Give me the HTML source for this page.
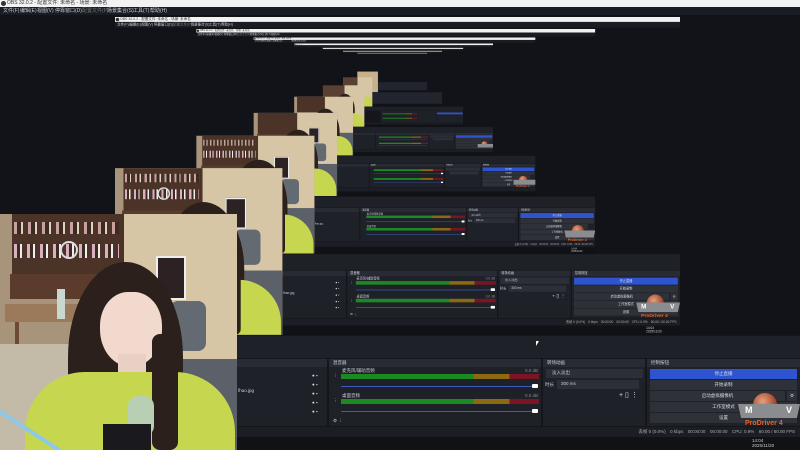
<!DOCTYPE html>
<html><head><meta charset="utf-8"><style>
*{margin:0;padding:0;box-sizing:border-box}
html,body{width:800px;height:450px;overflow:hidden;background:#111318}
.L{position:absolute;left:0;top:0;width:800px;height:450px;background:#111318;overflow:hidden;font-family:"Liberation Sans","Noto Sans CJK SC",sans-serif;color:#c9ccd4;font-size:5px;line-height:1}
.L div,.L span,.L i{position:absolute;display:block}
.ch{left:115px;top:17px;width:800px;height:450px;transform:scale(.70625);transform-origin:0 0}
.tb{left:0;top:0;width:800px;height:7px;background:#f2f2f2;color:#333;line-height:7px;padding-left:7px;white-space:nowrap}
.tb i{left:1px;top:1px;width:5px;height:5px;border-radius:50%;background:#333}
.mb{left:0;top:7px;width:800px;height:8px;background:#1a1c23;color:#c9ccd4}
.mb span{top:2px;white-space:nowrap}
.L .ph{left:0;top:214px;width:237px;height:236px;overflow:hidden;background:#a8947a;z-index:5}
.dk{left:0;top:335px;width:800px;height:92px;background:#14161b}
.bd{left:0;top:336px;width:800px;height:22px;background:#1f2129}
.pn{top:359px;height:67px;background:#1f2129}
.hd{left:0;top:0;width:100%;height:8px;background:#292b34;color:#d0d3da;padding:2px 0 0 4px;font-size:4.5px}
.t{white-space:nowrap;font-size:4.5px}
.btn{left:650px;width:147px;height:10px;background:#2f3139;color:#d8dae0;text-align:center;line-height:10px;font-size:4.5px}
.st{left:0;top:427px;width:800px;height:10px;background:#1c1e25}
.tk{left:0;top:437px;width:800px;height:13px;background:#101216}
.mt{height:5px;background:linear-gradient(90deg,#1c8a22 0 67%,#8b6a12 67% 85%,#7b1424 85%)}
.sl{height:1px;background:#3a5bbb}
.kn{width:6px;height:4px;background:#fff;border-radius:1px}
</style></head><body>
<div class="L">
<div class="tb"><i></i>OBS 32.0.2 - 配置文件: 未命名 - 场景: 未命名</div>
<div class="mb"><span style="left:3px">文件(F)</span><span style="left:20px">编辑(E)</span><span style="left:37px">视图(V)</span><span style="left:55px">停靠窗口(D)</span><span style="left:82px;color:#777">配置文件(P)</span><span style="left:107px">场景集合(S)</span><span style="left:133px">工具(T)</span><span style="left:150px">帮助(H)</span></div>
<div class="ch">
 <div class="L">
 <div class="tb"><i></i>OBS 32.0.2 - 配置文件: 未命名 - 场景: 未命名</div>
 <div class="mb"><span style="left:3px">文件(F)</span><span style="left:20px">编辑(E)</span><span style="left:37px">视图(V)</span><span style="left:55px">停靠窗口(D)</span><span style="left:82px;color:#777">配置文件(P)</span><span style="left:107px">场景集合(S)</span><span style="left:133px">工具(T)</span><span style="left:150px">帮助(H)</span></div>
 <div class="ch">
  <div class="L">
  <div class="tb"><i></i>OBS 32.0.2 - 配置文件: 未命名 - 场景: 未命名</div>
  <div class="mb"><span style="left:3px">文件(F)</span><span style="left:20px">编辑(E)</span><span style="left:37px">视图(V)</span><span style="left:55px">停靠窗口(D)</span><span style="left:82px;color:#777">配置文件(P)</span><span style="left:107px">场景集合(S)</span><span style="left:133px">工具(T)</span><span style="left:150px">帮助(H)</span></div>
  <div class="ch">
   <div class="L">
   <div class="tb"><i></i>OBS 32.0.2 - 配置文件: 未命名 - 场景: 未命名</div>
   <div class="mb"><span style="left:3px">文件(F)</span><span style="left:20px">编辑(E)</span><span style="left:37px">视图(V)</span><span style="left:55px">停靠窗口(D)</span><span style="left:107px">场景集合(S)</span><span style="left:133px">工具(T)</span></div>
   <div class="ch">
    <div class="L">
    <div class="tb"><i></i>OBS 32.0.2</div>
    <div class="mb"></div>
    <div class="ch">
     <div class="L">
     <div class="tb"></div><div class="mb"></div>
     <div class="ch">
      <div class="L">
      <div class="tb"></div><div class="mb"></div>
      <div class="ch"><div class="L"><div class="tb"></div><div class="mb"></div><div class="ph" style="background:#c8b08a"></div><div class="dk" style="background:#22252d"></div><div class="tk"></div></div></div>
      <div class="ph" style="background:linear-gradient(90deg,#5a4030 0 50%,#d6c6a6 50%)"><div style="left:25px;top:158px;width:210px;height:90px;background:#c6d64e"></div></div>
      <div class="dk" style="background:#22252d"></div><div class="tk"></div>
      </div>
     </div>
     <div class="ph" style="background:linear-gradient(90deg,#5a4030 0 52%,#d6c6a6 52%)"><div style="left:68px;top:48px;width:115px;height:190px;background:#2c201c;border-radius:50%"></div><div style="left:25px;top:158px;width:210px;height:90px;background:#c6d64e;border-radius:60px 60px 0 0"></div></div>
     <div class="dk"></div><div class="bd"></div><div class="pn" style="left:329px;width:212px"><div class="mt" style="left:12px;top:15px;width:198px"></div><div class="mt" style="left:12px;top:40px;width:198px"></div></div><div class="pn" style="left:543px;width:102px"></div><div class="pn" style="left:647px;width:153px"><div style="left:3px;top:10px;width:147px;height:10px;background:#2e54d0"></div></div><div class="st"></div><div class="tk"></div>
     </div>
    </div>
    <div class="ph">
     <div style="left:12px;top:0;width:112px;height:62px;background:#4b3327"></div>
     <div style="left:124px;top:0;width:113px;height:150px;background:#d6c6a6"></div>
     <div style="left:0;top:130px;width:125px;height:106px;background:#c4baa8"></div>
     <div style="left:165px;top:145px;width:72px;height:91px;background:#5c6068"></div>
     <div style="left:68px;top:48px;width:115px;height:190px;background:#2c201c;border-radius:50% 50% 10% 10%"></div>
     <div style="left:100px;top:78px;width:62px;height:75px;background:#f1d9ce;border-radius:45% 45% 50% 50%"></div>
     <div style="left:25px;top:158px;width:210px;height:90px;background:#c6d64e;border-radius:60px 60px 0 0"></div>
     <div style="left:128px;top:182px;width:26px;height:40px;background:#b9cfb3;border-radius:10px"></div>
    </div>
    <div class="dk"></div><div class="bd"></div>
    <div class="pn" style="left:0;width:327px"><div class="hd"></div></div>
    <div class="pn" style="left:329px;width:212px"><div class="hd"></div><div class="mt" style="left:12px;top:15px;width:198px"></div><div class="sl" style="left:12px;top:27px;width:194px"></div><div class="mt" style="left:12px;top:40px;width:198px"></div><div class="sl" style="left:12px;top:52px;width:194px"></div></div>
    <div class="pn" style="left:543px;width:102px"><div class="hd"></div><div style="left:3px;top:10px;width:97px;height:9px;background:#2c2e38"></div><div style="left:14px;top:21px;width:82px;height:9px;background:#2c2e38"></div></div>
    <div class="pn" style="left:647px;width:153px"><div class="hd"></div></div>
    <div class="btn" style="top:369px;background:#2e54d0"></div><div class="btn" style="top:380px"></div><div class="btn" style="top:391px;width:135px"></div><div class="btn" style="top:402px"></div><div class="btn" style="top:413px"></div>
    <div style="left:753px;top:393px;width:24px;height:24px;border-radius:50%;background:radial-gradient(circle at 40% 35%,#e8a080,#a04a2a 60%,#6a2a18)"></div>
    <div style="left:738px;top:404px;width:62px;height:14px;background:#8a8c90"></div>
    <div class="st"></div><div class="tk"></div>
    </div>
   </div>
   <div class="ph">
    <div style="left:12px;top:0;width:112px;height:62px;background:#4b3327"></div>
    <div style="left:10px;top:60px;width:100px;height:25px;background:#5b3b2b"></div>
    <div style="left:124px;top:0;width:113px;height:150px;background:#d6c6a6"></div>
    <div style="left:156px;top:42px;width:30px;height:44px;background:#2c2224;border:2px solid #eee"></div>
    <div style="left:0;top:130px;width:125px;height:106px;background:#c4baa8"></div>
    <div style="left:170px;top:87px;width:36px;height:50px;background:#646a72;border-radius:8px"></div>
    <div style="left:165px;top:145px;width:72px;height:91px;background:#5c6068"></div>
    <div style="left:68px;top:48px;width:115px;height:190px;background:#2c201c;border-radius:50% 50% 10% 10%"></div>
    <div style="left:100px;top:78px;width:62px;height:75px;background:#f1d9ce;border-radius:45% 45% 50% 50%"></div>
    <div style="left:25px;top:158px;width:210px;height:90px;background:#c6d64e;border-radius:60px 60px 0 0"></div>
    <div style="left:128px;top:182px;width:26px;height:40px;background:#b9cfb3;border-radius:10px"></div>
    <div style="left:103px;top:210px;width:48px;height:26px;background:#1a1a1e"></div>
   </div>
   <div class="dk"></div><div class="bd"></div>
   <div class="pn" style="left:0;width:327px"><div class="hd"></div></div>
   <div class="pn" style="left:329px;width:212px"><div class="hd">混音器</div><div class="mt" style="left:12px;top:15px;width:198px"></div><div class="sl" style="left:12px;top:27px;width:194px"></div><div class="kn" style="left:203px;top:25px"></div><div class="mt" style="left:12px;top:40px;width:198px"></div><div class="sl" style="left:12px;top:52px;width:194px"></div><div class="kn" style="left:203px;top:50px"></div></div>
   <div class="pn" style="left:543px;width:102px"><div class="hd">转场动画</div><div style="left:3px;top:10px;width:97px;height:9px;background:#2c2e38"></div><div style="left:14px;top:21px;width:82px;height:9px;background:#2c2e38"></div></div>
   <div class="pn" style="left:647px;width:153px"><div class="hd">控制按钮</div></div>
   <div class="btn" style="top:369px;background:#2e54d0">停止直播</div><div class="btn" style="top:380px">开始录制</div><div class="btn" style="top:391px;width:135px">启动虚拟摄像机</div><div class="btn" style="top:402px">工作室模式</div><div class="btn" style="top:413px">设置</div>
   <div style="left:753px;top:393px;width:24px;height:24px;border-radius:50%;background:radial-gradient(circle at 40% 35%,#e8a080,#a04a2a 60%,#6a2a18)"></div>
   <div style="left:738px;top:404px;width:62px;height:14px;background:#8a8c90"></div>
   <div class="t" style="left:745px;top:420px;color:#e8622a;font-weight:bold;font-size:7px">ProDriver 4</div>
   <div class="st"></div><div class="tk"></div>
   </div>
  </div>
  <div class="ph">
   <div style="left:12px;top:0;width:112px;height:62px;background:#4b3327"></div>
   <div style="left:14px;top:8px;width:105px;height:12px;background:repeating-linear-gradient(90deg,#c8a0a0 0 3px,#3a2a20 3px 7px,#e0d0c0 7px 9px,#4b3327 9px 14px)"></div>
   <div style="left:14px;top:30px;width:105px;height:14px;background:repeating-linear-gradient(90deg,#d8b0c0 0 3px,#3a2a20 3px 6px,#eee 6px 8px,#4b3327 8px 13px)"></div>
   <div style="left:10px;top:60px;width:100px;height:25px;background:#5b3b2b"></div>
   <div style="left:124px;top:0;width:113px;height:150px;background:#d6c6a6"></div>
   <div style="left:156px;top:42px;width:30px;height:44px;background:#2c2224;border:2px solid #eee"></div>
   <div style="left:5px;top:90px;width:80px;height:18px;background:#9a7a5a"></div>
   <div style="left:0;top:130px;width:125px;height:106px;background:#c4baa8"></div>
   <div style="left:170px;top:87px;width:36px;height:50px;background:#646a72;border-radius:8px"></div>
   <div style="left:165px;top:145px;width:72px;height:91px;background:#5c6068"></div>
   <div style="left:68px;top:48px;width:115px;height:190px;background:#2c201c;border-radius:50% 50% 10% 10%"></div>
   <div style="left:100px;top:78px;width:62px;height:75px;background:#f1d9ce;border-radius:45% 45% 50% 50%"></div>
   <div style="left:25px;top:158px;width:210px;height:90px;background:#c6d64e;border-radius:60px 60px 0 0"></div>
   <div style="left:152px;top:120px;width:26px;height:116px;background:#2c201c;border-radius:8px"></div>
   <div style="left:128px;top:182px;width:26px;height:40px;background:#b9cfb3;border-radius:10px"></div>
   <div style="left:103px;top:210px;width:48px;height:26px;background:#1a1a1e"></div>
  </div>
  <div class="dk"></div><div class="bd"></div>
  <div class="pn" style="left:0;width:327px"><div class="hd"></div><div class="t" style="left:238px;top:30px">fhao.jpg</div></div>
  <div class="pn" style="left:329px;width:212px"><div class="hd">混音器</div><div class="t" style="left:13px;top:10px">麦克风/辅助音频</div><div class="mt" style="left:12px;top:15px;width:198px"></div><div class="sl" style="left:12px;top:27px;width:194px"></div><div class="kn" style="left:203px;top:25px"></div><div class="t" style="left:13px;top:35px">桌面音频</div><div class="mt" style="left:12px;top:40px;width:198px"></div><div class="sl" style="left:12px;top:52px;width:194px"></div><div class="kn" style="left:203px;top:50px"></div></div>
  <div class="pn" style="left:543px;width:102px"><div class="hd">转场动画</div><div class="t" style="left:3px;top:10px;width:97px;height:9px;background:#2c2e38;padding:2px 6px">淡入淡出</div><div class="t" style="left:2px;top:24px">时长</div><div class="t" style="left:14px;top:21px;width:82px;height:9px;background:#2c2e38;padding:2px 4px">300 ms</div></div>
  <div class="pn" style="left:647px;width:153px"><div class="hd">控制按钮</div></div>
  <div class="btn" style="top:369px;background:#2e54d0">停止直播</div><div class="btn" style="top:380px">开始录制</div><div class="btn" style="top:391px;width:135px">启动虚拟摄像机</div><div class="btn" style="top:402px">工作室模式</div><div class="btn" style="top:413px">设置</div>
  <div style="left:753px;top:393px;width:24px;height:24px;border-radius:50%;background:radial-gradient(circle at 40% 35%,#e8a080,#a04a2a 60%,#6a2a18)"></div>
  <div style="left:738px;top:404px;width:62px;height:14px;background:#8a8c90;clip-path:polygon(0 0,100% 0,95% 100%,5% 100%)"></div>
  <div class="t" style="left:745px;top:420px;color:#e8622a;font-weight:bold;font-size:7px">ProDriver 4</div>
  <div class="st"><div class="t" style="right:5px;top:3px;color:#aaa">丢帧 0 (0.0%)　0 kbps　00:00:00　00:00:00　CPU: 0.9%　60.00 / 60.00 FPS</div></div>
  <div class="tk"><div class="t" style="left:752px;top:2px;color:#ccc">14:04<br>2025/11/20</div></div>
  </div>
 </div>
 <div class="ph">
  <div style="left:12px;top:0;width:112px;height:62px;background:#4b3327"></div>
  <div style="left:14px;top:8px;width:105px;height:12px;background:repeating-linear-gradient(90deg,#c8a0a0 0 3px,#3a2a20 3px 7px,#e0d0c0 7px 9px,#4b3327 9px 14px)"></div>
  <div style="left:14px;top:30px;width:105px;height:14px;background:repeating-linear-gradient(90deg,#d8b0c0 0 3px,#3a2a20 3px 6px,#eee 6px 8px,#4b3327 8px 13px)"></div>
  <div style="left:60px;top:27px;width:18px;height:18px;border:2px solid #ddd;border-radius:50%"></div>
  <div style="left:10px;top:60px;width:100px;height:25px;background:#5b3b2b"></div>
  <div style="left:124px;top:0;width:113px;height:150px;background:#d6c6a6"></div>
  <div style="left:156px;top:42px;width:30px;height:44px;background:#2c2224;border:2px solid #eee"></div>
  <div style="left:5px;top:90px;width:80px;height:18px;background:#9a7a5a"></div>
  <div style="left:0;top:130px;width:125px;height:106px;background:#c4baa8"></div>
  <div style="left:57px;top:75px;width:8px;height:30px;background:#c8d8d0"></div>
  <div style="left:170px;top:87px;width:36px;height:50px;background:#646a72;border-radius:8px"></div>
  <div style="left:165px;top:145px;width:72px;height:91px;background:#5c6068"></div>
  <div style="left:68px;top:48px;width:115px;height:190px;background:#2c201c;border-radius:50% 50% 10% 10%"></div>
  <div style="left:100px;top:78px;width:62px;height:75px;background:#f1d9ce;border-radius:45% 45% 50% 50%"></div>
  <div style="left:25px;top:158px;width:210px;height:90px;background:#c6d64e;border-radius:60px 60px 0 0"></div>
  <div style="left:152px;top:120px;width:26px;height:116px;background:#2c201c;border-radius:8px"></div>
  <div style="left:128px;top:182px;width:26px;height:40px;background:#b9cfb3;border-radius:10px"></div>
  <div style="left:103px;top:210px;width:48px;height:26px;background:#1a1a1e"></div>
 </div>
 <div class="dk"></div><div class="bd"></div>
 <div class="pn" style="left:0;width:327px"><div class="hd"></div><div class="t" style="left:238px;top:30px">fhao.jpg</div><div class="t" style="left:312px;top:12px;line-height:9px;color:#ddd">● ▪<br>● ▪<br>● ▪<br>● ▪<br>● ▪</div></div>
 <div class="pn" style="left:329px;width:212px"><div class="hd">混音器</div><div class="t" style="left:13px;top:10px">麦克风/辅助音频</div><div class="t" style="left:196px;top:10px;color:#888">0.0 dB</div><div class="mt" style="left:12px;top:15px;width:198px"></div><div class="t" style="left:4px;top:15px">⋮</div><div class="sl" style="left:12px;top:27px;width:194px"></div><div class="kn" style="left:203px;top:25px"></div><div class="t" style="left:13px;top:35px">桌面音频</div><div class="t" style="left:196px;top:35px;color:#888">0.0 dB</div><div class="mt" style="left:12px;top:40px;width:198px"></div><div class="t" style="left:4px;top:40px">⋮</div><div class="sl" style="left:12px;top:52px;width:194px"></div><div class="kn" style="left:203px;top:50px"></div><div class="t" style="left:4px;top:60px">⚙ ⋮</div></div>
 <div class="pn" style="left:543px;width:102px"><div class="hd">转场动画</div><div class="t" style="left:3px;top:10px;width:97px;height:9px;background:#2c2e38;padding:2px 6px">淡入淡出</div><div class="t" style="left:2px;top:24px">时长</div><div class="t" style="left:14px;top:21px;width:82px;height:9px;background:#2c2e38;padding:2px 4px">300 ms</div><div class="t" style="left:76px;top:33px;font-size:7px;color:#ddd">+ ▯ ⋮</div></div>
 <div class="pn" style="left:647px;width:153px"><div class="hd">控制按钮</div></div>
 <div class="btn" style="top:369px;background:#2e54d0">停止直播</div><div class="btn" style="top:380px">开始录制</div><div class="btn" style="top:391px;width:135px">启动虚拟摄像机</div><div class="btn" style="top:391px;left:787px;width:10px">⚙</div><div class="btn" style="top:402px">工作室模式</div><div class="btn" style="top:413px">设置</div>
 <div style="left:753px;top:393px;width:24px;height:24px;border-radius:50%;background:radial-gradient(circle at 40% 35%,#e8a080,#a04a2a 60%,#6a2a18)"></div>
 <div style="left:738px;top:404px;width:62px;height:14px;background:#8a8c90;clip-path:polygon(0 0,100% 0,95% 100%,5% 100%)"></div>
 <div class="t" style="left:745px;top:406px;color:#fff;font-weight:bold;font-size:9px">M</div><div class="t" style="left:786px;top:406px;color:#fff;font-weight:bold;font-size:9px">V</div>
 <div class="t" style="left:745px;top:420px;color:#e8622a;font-weight:bold;font-size:7px">ProDriver 4</div>
 <div class="st"><div class="t" style="right:5px;top:3px;color:#aaa">丢帧 0 (0.0%)　0 kbps　00:00:00　00:00:00　CPU: 0.9%　60.00 / 60.00 FPS</div></div>
 <div class="tk"><div class="t" style="left:752px;top:2px;color:#ccc">14:04<br>2025/11/20</div></div>
 </div>
</div>
<div class="ph">
 <div style="left:12px;top:0;width:112px;height:62px;background:#4b3327"></div>
 <div style="left:14px;top:8px;width:105px;height:12px;background:repeating-linear-gradient(90deg,#c8a0a0 0 3px,#3a2a20 3px 7px,#e0d0c0 7px 9px,#4b3327 9px 14px)"></div>
 <div style="left:14px;top:30px;width:105px;height:14px;background:repeating-linear-gradient(90deg,#d8b0c0 0 3px,#3a2a20 3px 6px,#eee 6px 8px,#4b3327 8px 13px)"></div>
 <div style="left:60px;top:27px;width:18px;height:18px;border:2px solid #ddd;border-radius:50%"></div>
 <div style="left:10px;top:60px;width:100px;height:25px;background:#5b3b2b"></div>
 <div style="left:124px;top:0;width:113px;height:150px;background:#d6c6a6"></div>
 <div style="left:156px;top:42px;width:30px;height:44px;background:#2c2224;border:2px solid #eee"></div>
 <div style="left:5px;top:90px;width:80px;height:18px;background:#9a7a5a"></div>
 <div style="left:15px;top:108px;width:4px;height:60px;background:#6a4a34"></div>
 <div style="left:0;top:130px;width:125px;height:106px;background:#c4baa8"></div>
 <div style="left:57px;top:75px;width:8px;height:30px;background:#c8d8d0"></div>
 <div style="left:170px;top:87px;width:36px;height:50px;background:#646a72;border-radius:8px"></div>
 <div style="left:165px;top:145px;width:72px;height:91px;background:#5c6068"></div>
 <div style="left:68px;top:48px;width:115px;height:190px;background:#2c201c;border-radius:50% 50% 10% 10%"></div>
 <div style="left:100px;top:78px;width:62px;height:75px;background:#f1d9ce;border-radius:45% 45% 50% 50%"></div>
 <div style="left:118px;top:140px;width:28px;height:22px;background:#ead0c4"></div>
 <div style="left:25px;top:158px;width:210px;height:90px;background:#c6d64e;border-radius:60px 60px 0 0"></div>
 <div style="left:152px;top:120px;width:26px;height:116px;background:#2c201c;border-radius:8px"></div>
 <div style="left:128px;top:182px;width:26px;height:40px;background:#b9cfb3;border-radius:10px"></div>
 <div style="left:103px;top:210px;width:48px;height:26px;background:#1a1a1e"></div>
 <div style="left:-5px;top:192px;width:120px;height:4px;background:#8cc8ea;transform:rotate(33deg);transform-origin:0 0"></div>
</div>
<div class="dk"></div><div class="bd"></div>
<div class="pn" style="left:0;width:327px"><div class="hd"></div><div class="t" style="left:238px;top:30px">fhao.jpg</div><div class="t" style="left:312px;top:12px;line-height:9px;color:#ddd">● ▪<br>● ▪<br>● ▪<br>● ▪<br>● ▪</div></div>
<div class="pn" style="left:329px;width:212px"><div class="hd">混音器</div><div class="t" style="left:13px;top:10px">麦克风/辅助音频</div><div class="t" style="left:196px;top:10px;color:#888">0.0 dB</div><div class="mt" style="left:12px;top:15px;width:198px"></div><div class="t" style="left:4px;top:15px">⋮</div><div class="sl" style="left:12px;top:27px;width:194px"></div><div class="kn" style="left:203px;top:25px"></div><div class="t" style="left:13px;top:35px">桌面音频</div><div class="t" style="left:196px;top:35px;color:#888">0.0 dB</div><div class="mt" style="left:12px;top:40px;width:198px"></div><div class="t" style="left:4px;top:40px">⋮</div><div class="sl" style="left:12px;top:52px;width:194px"></div><div class="kn" style="left:203px;top:50px"></div><div class="t" style="left:4px;top:60px">⚙ ⋮</div></div>
<div class="pn" style="left:543px;width:102px"><div class="hd">转场动画</div><div class="t" style="left:3px;top:10px;width:97px;height:9px;background:#2c2e38;padding:2px 6px">淡入淡出</div><div class="t" style="left:2px;top:24px">时长</div><div class="t" style="left:14px;top:21px;width:82px;height:9px;background:#2c2e38;padding:2px 4px">300 ms</div><div class="t" style="left:76px;top:33px;font-size:7px;color:#ddd">+ ▯ ⋮</div></div>
<div class="pn" style="left:647px;width:153px"><div class="hd">控制按钮</div></div>
<div class="btn" style="top:369px;background:#2e54d0">停止直播</div><div class="btn" style="top:380px">开始录制</div><div class="btn" style="top:391px;width:135px">启动虚拟摄像机</div><div class="btn" style="top:391px;left:787px;width:10px">⚙</div><div class="btn" style="top:402px">工作室模式</div><div class="btn" style="top:413px">设置</div>
<div style="left:753px;top:393px;width:24px;height:24px;border-radius:50%;background:radial-gradient(circle at 40% 35%,#e8a080,#a04a2a 60%,#6a2a18)"></div>
<div style="left:738px;top:404px;width:62px;height:14px;background:#8a8c90;clip-path:polygon(0 0,100% 0,95% 100%,5% 100%)"></div>
<div class="t" style="left:745px;top:406px;color:#fff;font-weight:bold;font-size:9px">M</div><div class="t" style="left:786px;top:406px;color:#fff;font-weight:bold;font-size:9px">V</div>
<div class="t" style="left:745px;top:420px;color:#e8622a;font-weight:bold;font-size:7px">ProDriver 4</div>
<div class="st"><div class="t" style="right:5px;top:3px;color:#aaa">丢帧 0 (0.0%)　0 kbps　00:00:00　00:00:00　CPU: 0.9%　60.00 / 60.00 FPS</div></div>
<div class="tk"><div class="t" style="left:752px;top:2px;color:#ccc">14:04<br>2025/11/20</div></div>
<div style="left:536px;top:341px;width:0;height:0;border-left:3px solid #fff;border-bottom:5px solid transparent"></div>
</div>
</body></html>
